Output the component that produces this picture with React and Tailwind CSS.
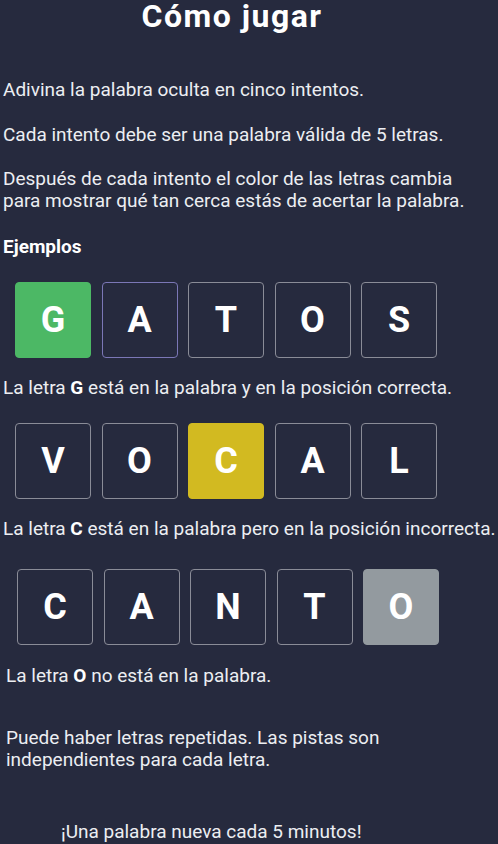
import React from "react";

const font = { fontFamily: "Roboto, 'Noto Sans', sans-serif" };

function Tile({ letter, kind }) {
  let cls = "border border-[#8a8c97] bg-transparent";
  if (kind === "green") cls = "bg-[#4cb865] border border-[#4cb865]";
  if (kind === "yellow") cls = "bg-[#d2ba21] border border-[#d2ba21]";
  if (kind === "gray") cls = "bg-[#939a9f] border border-[#939a9f]";
  if (kind === "focus") cls = "border border-[#7b77b6] bg-transparent";
  return (
    <div
      className={`w-[76px] h-[76px] rounded-[4px] flex items-center justify-center text-white font-bold text-[36px] leading-none ${cls}`}
    >
      {letter}
    </div>
  );
}

function Row({ word, kinds, className }) {
  return (
    <div className={`flex gap-[10.5px] ${className}`}>
      {word.split("").map((l, i) => (
        <Tile key={i} letter={l} kind={kinds[i]} />
      ))}
    </div>
  );
}

export default function App() {
  return (
    <div
      className="w-[498px] h-[844px] overflow-hidden bg-[#262a3e] text-[#eceef2] text-[19px] leading-[22px]"
      style={font}
    >
      <h1 className="w-[464px] text-center text-white font-bold text-[32px] tracking-[1.5px] leading-[32px] whitespace-nowrap">
        Cómo jugar
      </h1>
      <p className="mt-[47px] pl-[3px] whitespace-nowrap">Adivina la palabra oculta en cinco intentos.</p>
      <p className="mt-[23px] pl-[3px] whitespace-nowrap">Cada intento debe ser una palabra válida de 5 letras.</p>
      <p className="mt-[22px] pl-[3px] whitespace-nowrap">
        Después de cada intento el color de las letras cambia
        <br />
        para mostrar qué tan cerca estás de acertar la palabra.
      </p>
      <p className="mt-[24px] pl-[3px] font-bold text-white">Ejemplos</p>

      <Row
        className="mt-[24px] pl-[15px]"
        word="GATOS"
        kinds={["green", "focus", "", "", ""]}
      />
      <p className="mt-[19px] pl-[3px] whitespace-nowrap">
        La letra <b className="text-white">G</b> está en la palabra y en la posición correcta.
      </p>

      <Row
        className="mt-[24px] pl-[15px]"
        word="VOCAL"
        kinds={["", "", "yellow", "", ""]}
      />
      <p className="mt-[19px] pl-[3px] whitespace-nowrap">
        La letra <b className="text-white">C</b> está en la palabra pero en la posición incorrecta.
      </p>

      <Row
        className="mt-[29px] pl-[17px]"
        word="CANTO"
        kinds={["", "", "", "", "gray"]}
      />
      <p className="mt-[20px] pl-[6px] whitespace-nowrap">
        La letra <b className="text-white">O</b> no está en la palabra.
      </p>

      <p className="mt-[40px] pl-[6px] whitespace-nowrap">
        Puede haber letras repetidas. Las pistas son
        <br />
        independientes para cada letra.
      </p>

      <p className="mt-[50px] pl-[61px] whitespace-nowrap">¡Una palabra nueva cada 5 minutos!</p>
    </div>
  );
}
